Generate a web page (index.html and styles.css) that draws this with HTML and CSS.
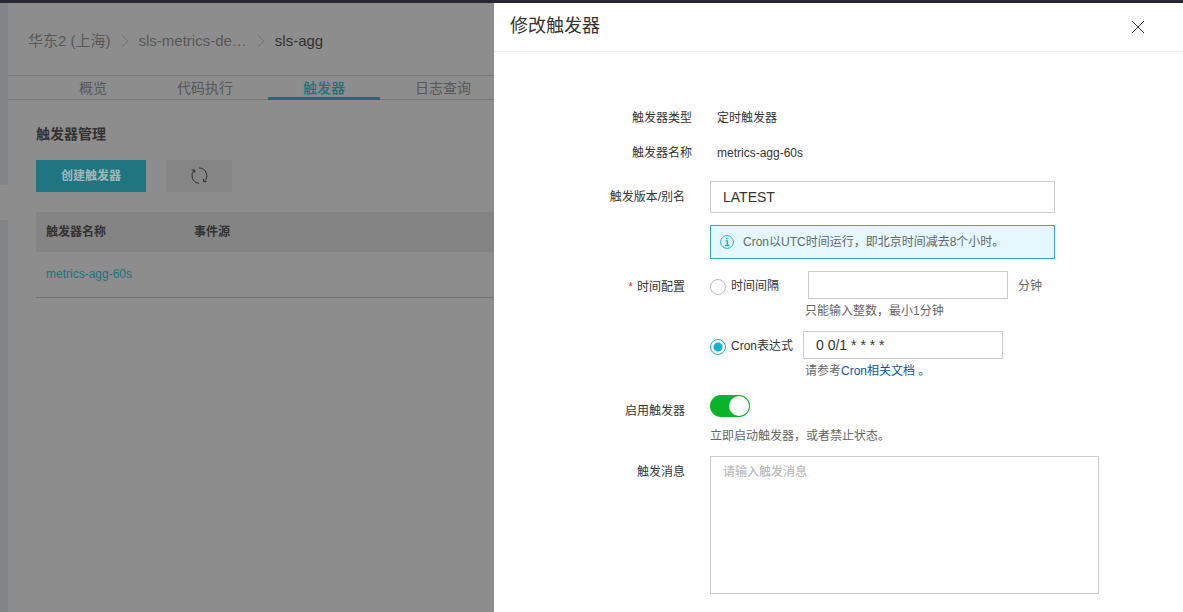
FILE: index.html
```html
<!DOCTYPE html>
<html lang="zh-CN">
<head>
<meta charset="utf-8">
<meta name="viewport" content="width=device-width, initial-scale=1">
<title>修改触发器</title>
<link rel="stylesheet" href="styles.css">
</head>
<body>
<div class="topbar"></div>
<div class="layout">
  <div class="console">
    <aside class="rail"><div class="rail-top"></div><div class="rail-bottom"></div></aside>
    <main class="page">
      <nav class="breadcrumb" aria-label="路径">
        <a class="crumb" href="#">华东2 (上海)</a>
        <svg class="chevron" viewBox="0 0 8 14"><path d="M1 1l6 6-6 6"/></svg>
        <a class="crumb" href="#">sls-metrics-de…</a>
        <svg class="chevron" viewBox="0 0 8 14"><path d="M1 1l6 6-6 6"/></svg>
        <span class="crumb crumb-current">sls-agg</span>
      </nav>
      <nav class="tabs" aria-label="函数">
        <a class="tab tab-first" href="#">概览</a>
        <a class="tab" href="#">代码执行</a>
        <a class="tab tab-active" href="#">触发器</a>
        <a class="tab" href="#">日志查询</a>
      </nav>
      <section class="content">
        <h2 class="section-title">触发器管理</h2>
        <div class="toolbar">
          <button class="btn btn-primary" type="button">创建触发器</button>
          <button class="btn btn-refresh" type="button" aria-label="刷新">
            <svg class="refresh-icon" viewBox="0 0 18 18">
              <path d="M9 16.2A7.6 7.6 0 0 1 4.4 3M9 1a7.6 7.6 0 0 1 4.8 13.6"/>
              <path d="M1.6 3.2l2.9-.3.4 3M13.3 11.8l.4 3 2.9-.3"/>
            </svg>
          </button>
        </div>
        <table class="table">
          <thead><tr><th class="col-name">触发器名称</th><th>事件源</th></tr></thead>
          <tbody><tr><td><a class="table-link" href="#">metrics-agg-60s</a></td><td></td></tr></tbody>
        </table>
      </section>
    </main>
  </div>

  <section class="drawer" role="dialog" aria-labelledby="drawer-title">
    <header class="drawer-header">
      <h1 class="drawer-title" id="drawer-title">修改触发器</h1>
      <button class="close" type="button" aria-label="关闭">
        <svg class="close-icon" viewBox="0 0 14 14"><path d="M1 1l12 12M13 1L1 13"/></svg>
      </button>
    </header>
    <form class="form">
      <div class="row row-static">
        <span class="label">触发器类型</span><span class="value">定时触发器</span>
      </div>
      <div class="row row-static row-name">
        <span class="label">触发器名称</span><span class="value">metrics-agg-60s</span>
      </div>
      <div class="row row-version">
        <label class="label label-field" for="version">触发版本/别名</label>
        <div class="control">
          <input class="field field-version" id="version" type="text" value="LATEST">
          <div class="notice">
            <svg class="notice-icon" viewBox="0 0 14 14"><circle cx="7" cy="7" r="6.4"/><path class="notice-glyph" d="M5.4 5.9h1.9v4.5M5 10.5h4.4M6.3 3.5h1.5"/></svg>
            <span>Cron以UTC时间运行，即北京时间减去8个小时。</span>
          </div>
        </div>
      </div>
      <div class="row row-time">
        <span class="label label-field" id="time-label"><span class="required">*</span>时间配置</span>
        <div class="control" role="radiogroup" aria-labelledby="time-label">
          <div class="option">
            <input class="radio" id="mode-interval" type="radio" name="mode">
            <label class="radio-label radio-label-wide" for="mode-interval">时间间隔</label>
            <input class="field field-small" type="text" aria-label="时间间隔（分钟）">
            <span class="unit">分钟</span>
          </div>
          <p class="hint hint-indent">只能输入整数，最小1分钟</p>
          <div class="option option-cron">
            <input class="radio" id="mode-cron" type="radio" name="mode" checked>
            <label class="radio-label" for="mode-cron">Cron表达式</label>
            <input class="field field-small" type="text" aria-label="Cron表达式" value="0 0/1 * * * *">
          </div>
          <p class="hint hint-indent">请参考<a class="doc-link" href="#">Cron相关文档 。</a></p>
        </div>
      </div>
      <div class="row row-enable">
        <label class="label label-field" for="enabled">启用触发器</label>
        <div class="control">
          <input class="switch" id="enabled" type="checkbox" role="switch" checked>
          <p class="hint hint-enable">立即启动触发器，或者禁止状态。</p>
        </div>
      </div>
      <div class="row row-message">
        <label class="label label-field" for="message">触发消息</label>
        <div class="control">
          <textarea class="field message" id="message" placeholder="请输入触发消息"></textarea>
        </div>
      </div>
    </form>
  </section>
</div>
</body>
</html>
```
FILE: styles.css
```css
* { box-sizing: border-box; }

body {
  margin: 0;
  min-height: 100vh;
  display: flex;
  flex-direction: column;
  background: #8d8d8d;
  color: #333;
  font: 12px/20px "Liberation Sans", "Noto Sans CJK SC", sans-serif;
}

h1, h2, p { margin: 0; font-weight: 400; }
a { text-decoration: none; }
button, input, textarea { margin: 0; font: inherit; color: inherit; }
svg { flex: none; fill: none; stroke: currentColor; }

.topbar { height: 3px; background: #282834; }

.layout {
  flex: 1;
  display: grid;
  grid-template-columns: minmax(0, 494fr) minmax(0, 689fr);
}

/* Dimmed console page */
.console { display: flex; overflow: hidden; }
.rail {
  flex: 0 0 8px;
  display: flex;
  flex-direction: column;
  gap: 35px;
}
.rail-top { height: 182px; background: #828486; }
.rail-bottom { flex: 1; background: #828486; }
.page { flex: 1; min-width: 0; }

.breadcrumb {
  display: flex;
  align-items: center;
  gap: 10px;
  height: 72px;
  padding: 4px 0 0 20px;
  font-size: 15px;
  white-space: nowrap;
}
.crumb { color: #585858; }
.crumb-current { color: #303030; }
.chevron { width: 8px; height: 14px; color: #747474; }

.tabs {
  display: flex;
  gap: 7px;
  height: 25px;
  padding-left: 29px;
  border-top: 1px solid #76787a;
  border-bottom: 1px solid #76787a;
  font-size: 14px;
  line-height: 24px;
}
.tab {
  flex: 0 0 112px;
  height: 24px;
  color: #575757;
  text-align: center;
}
.tab-first { margin-right: -7px; }
.tab-active {
  border-bottom: 3px solid #216b76;
  color: #1f7380;
  font-weight: 500;
}

.content { padding: 24px 0 0 28px; }
.section-title { color: #333; font-size: 14px; line-height: 20px; font-weight: 700; }
.toolbar { display: flex; gap: 20px; margin: 16px 0 20px; }
.btn { height: 32px; padding: 0; border: 0; }
.btn-primary {
  width: 110px;
  background: #1f7680;
  color: #a3b8bb;
  font-weight: 700;
}
.btn-refresh {
  display: flex;
  align-items: center;
  justify-content: center;
  width: 66px;
  background: #858585;
  color: #303030;
}
.refresh-icon { width: 18px; height: 18px; }

.table { width: 100%; border-spacing: 0; text-align: left; }
.table th {
  height: 40px;
  padding: 0 10px;
  background: #848484;
  font-weight: 700;
}
.table td {
  height: 46px;
  padding: 0 10px 2px;
  border-bottom: 1px solid #737475;
}
.col-name { width: 148px; }
.table-link { color: #1f707e; }

/* Drawer */
.drawer { background: #fff; }
.drawer-header {
  display: flex;
  align-items: center;
  justify-content: space-between;
  height: 49px;
  padding: 0 38px 1px 16px;
  border-bottom: 1px solid #ebebeb;
}
.drawer-title { font-size: 18px; line-height: 25px; }
.close {
  display: flex;
  padding: 0;
  border: 0;
  background: none;
}
.close-icon { width: 14px; height: 14px; }

.form { padding: 56px 84px 18px 0; }
.row { display: flex; gap: 25px; }
.row-static .label { flex-basis: 198px; }
.row-name { margin-top: 15px; }
.row-version { margin-top: 18px; }
.row-time { margin-top: 12px; }
.row-enable { margin-top: 14px; }
.row-message { margin-top: 10px; }

.label { flex: 0 0 191px; text-align: right; }
.label-field { padding-top: 6px; }
.required { margin-right: 4px; color: #e03c31; }
.control { flex: 1; min-width: 0; }

.field {
  display: block;
  width: 100%;
  border: 1px solid #ccc;
  border-radius: 0;
  background: #fff;
  padding: 0 12px;
  outline: 0;
}
.field-version { max-width: 345px; height: 32px; font-size: 14px; }
.field-small { flex: 0 1 200px; min-width: 0; height: 28px; font-size: 14px; }

.notice {
  display: flex;
  align-items: center;
  gap: 9px;
  max-width: 345px;
  min-height: 34px;
  margin-top: 12px;
  padding: 0 9px;
  border: 1px solid #35acb9;
  background: #e5f8fd;
  color: #666;
}
.notice-icon { width: 14px; height: 14px; color: #16b3ce; }
.notice-glyph { stroke-width: 1.4; }

.option { display: flex; align-items: center; }
.option-cron { margin-top: 10px; }
.radio {
  flex: none;
  width: 16px;
  height: 16px;
  margin-top: 3px;
  border: 1px solid #bbb;
  border-radius: 50%;
  appearance: none;
  background: #fff;
}
.radio:checked {
  border-color: #16b0ca;
  background: radial-gradient(circle, #16b3ce 4px, #fff 5px);
}
.radio-label { flex: none; padding: 2px 10px 0 5px; }
.radio-label-wide { padding-right: 29px; }
.unit { flex: none; margin-left: 10px; padding-top: 2px; color: #666; }

.hint { color: #666; }
.hint-indent { margin-top: 2px; padding-left: 95px; }
.doc-link { color: #0f52a8; }

.switch {
  display: block;
  width: 40px;
  height: 22px;
  padding: 1px;
  border-radius: 11px;
  background: #09b426;
  appearance: none;
}
.switch::before {
  content: "";
  display: block;
  width: 20px;
  height: 20px;
  border-radius: 50%;
  background: #fff;
}
.switch:checked::before { margin-left: auto; }
.hint-enable { margin-top: 9px; }

.message {
  height: 138px;
  max-width: 389px;
  padding-top: 5px;
  resize: none;
}
.message::placeholder { color: #bbb; font-weight: 500; opacity: 1; }
```
